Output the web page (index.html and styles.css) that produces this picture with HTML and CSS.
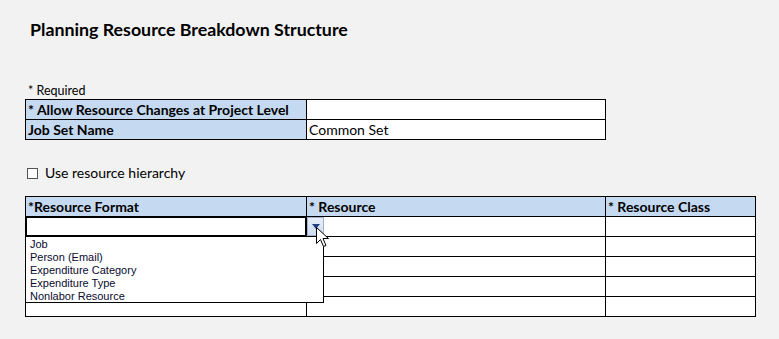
FILE: index.html
```html
<!DOCTYPE html>
<html>
<head>
<meta charset="utf-8">
<link rel="stylesheet" href="styles.css">
</head>
<body>
<div class="page">
  <h1 class="title">Planning Resource Breakdown Structure</h1>
  <div class="required">* Required</div>
  <table class="grid settings">
    <colgroup><col class="c1"><col class="c2"></colgroup>
    <tr><td class="hd">* Allow Resource Changes at Project Level</td><td></td></tr>
    <tr><td class="hd">Job Set Name</td><td class="val">Common Set</td></tr>
  </table>
  <label class="check"><span class="box"></span>Use resource hierarchy</label>
  <table class="grid resources">
    <colgroup><col class="c1"><col class="c2"><col class="c3"></colgroup>
    <tr class="head"><td>*Resource Format</td><td>* Resource</td><td>* Resource Class</td></tr>
    <tr>
      <td class="dropcell">
        <div class="selected"></div>
        <div class="btn"><svg width="8" height="5" viewBox="0 0 8 5"><path d="M0 0H8L4 5Z" fill="#1f3f7f"/></svg></div>
        <svg class="cursor" width="13" height="20" viewBox="0 0 13 20"><path d="M0.5 0.5V16.5L4.5 12.5L7.5 19.5L10 18.5L7 11.5H12.5Z" fill="#fff" stroke="#000" stroke-width="1"/></svg>
        <ul class="list">
          <li>Job</li>
          <li>Person (Email)</li>
          <li>Expenditure Category</li>
          <li>Expenditure Type</li>
          <li>Nonlabor Resource</li>
        </ul>
      </td>
      <td></td><td></td>
    </tr>
    <tr><td></td><td></td><td></td></tr>
    <tr><td></td><td></td><td></td></tr>
    <tr><td></td><td></td><td></td></tr>
    <tr><td></td><td></td><td></td></tr>
  </table>
</div>
</body>
</html>
```
FILE: styles.css
```css
html, body {
  margin: 0;
  background: #f2f2f2;
}
body {
  font-family: Lato, "Liberation Sans", sans-serif;
  color: #000;
}
.page {
  padding: 17px 0 0 25px;
}
.title {
  margin: 0 0 0 5px;
  font-size: 17.8px;
  font-weight: 700;
  line-height: 24px;
}
.required {
  margin: 41px 0 0 3px;
  font-size: 12.5px;
  line-height: 17px;
}
.grid {
  border-collapse: collapse;
  table-layout: fixed;
}
.grid td {
  border: 1px solid #000;
  height: 19px;
  padding: 0 0 0 2px;
  font-size: 14px;
  line-height: 19px;
  background: #fff;
  white-space: nowrap;
  overflow: visible;
}
.settings { width: 580px; }
.settings .c1 { width: 281px; }
.settings .c2 { width: 299px; }
.grid td.hd, .grid .head td {
  background: #c5d9f1;
  font-weight: 700;
}
.check {
  display: flex;
  align-items: center;
  gap: 7px;
  margin: 25px 0 0 2px;
  font-size: 14px;
  line-height: 16px;
}
.box {
  width: 9px;
  height: 9px;
  border: 1px solid #555;
  background: #fff;
}
.resources {
  margin-top: 15px;
  width: 730px;
}
.resources .c1 { width: 281px; }
.resources .c2 { width: 299px; }
.resources .c3 { width: 150px; }
.dropcell {
  position: relative;
}
.selected {
  position: absolute;
  left: -1px;
  top: -1px;
  width: 278px;
  height: 17px;
  border: 2px solid #000;
  background: #fff;
}
.btn {
  position: absolute;
  left: 281px;
  top: 0;
  width: 15px;
  height: 17px;
  border: 1px solid #9fb3cf;
  background: linear-gradient(#e6eef9, #cfdcee);
  display: flex;
  align-items: center;
  justify-content: center;
  z-index: 2;
}
.cursor {
  position: absolute;
  left: 290px;
  top: 10px;
  z-index: 3;
}
.list {
  position: absolute;
  left: -1px;
  top: 19px;
  width: 293px;
  height: 64px;
  margin: 0;
  padding: 1px 0 0 4px;
  box-sizing: content-box;
  list-style: none;
  border: 1px solid #000;
  background: #fff;
  z-index: 1;
  font-family: "Liberation Sans", sans-serif;
  font-size: 11px;
  line-height: 13px;
  color: #0a0a30;
}
.list li {
  margin: 0;
}
```
